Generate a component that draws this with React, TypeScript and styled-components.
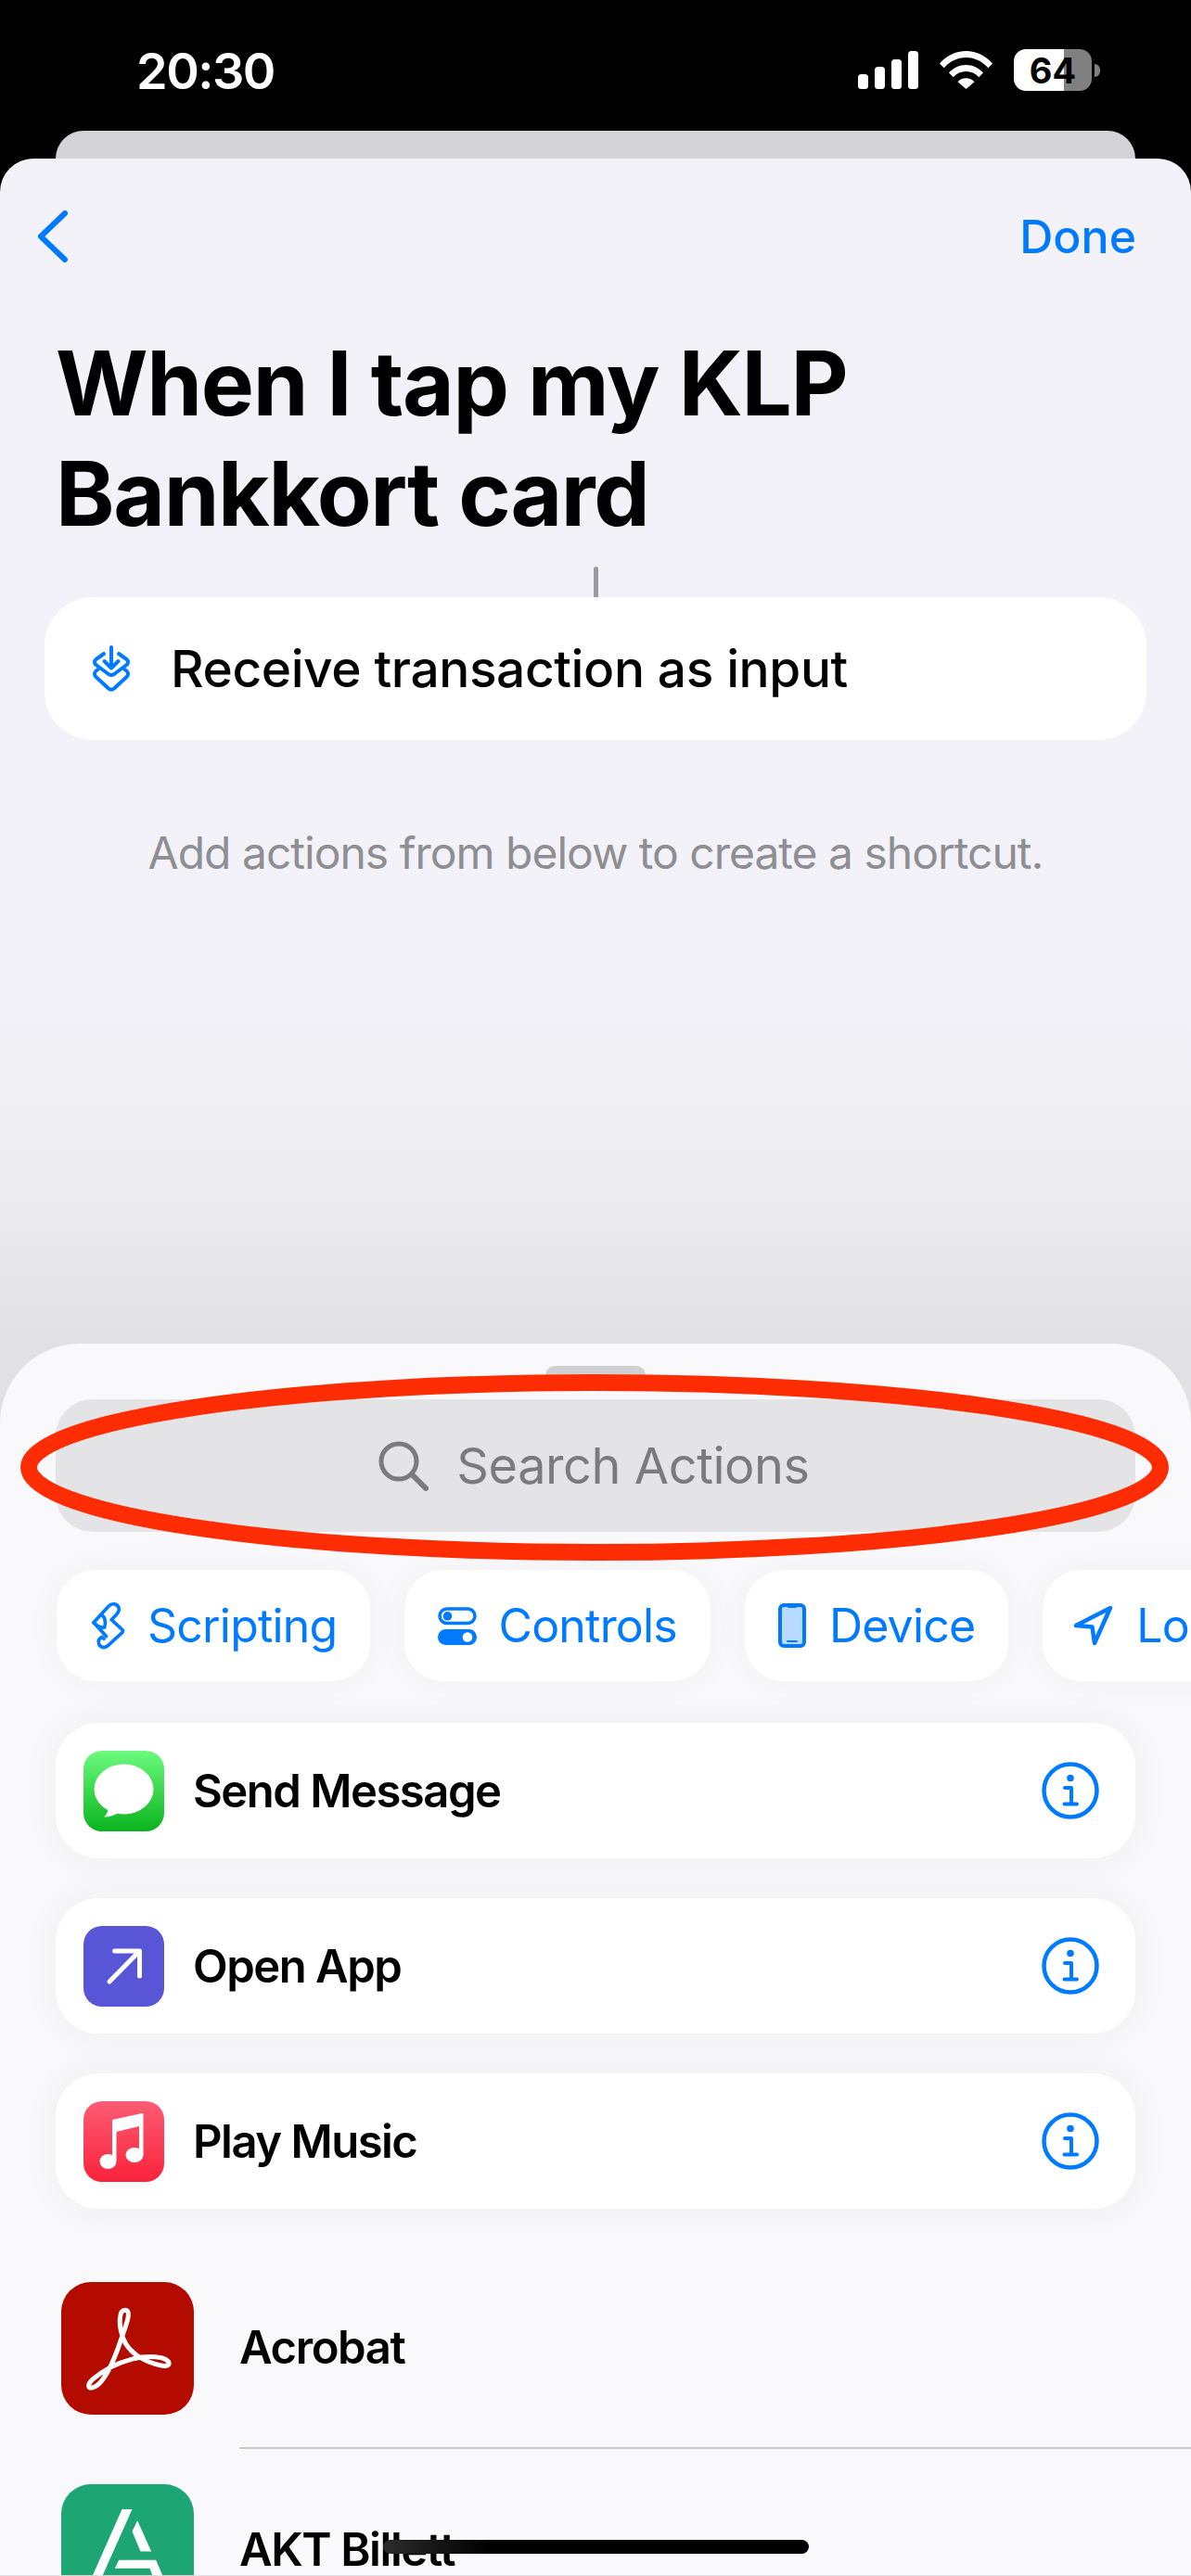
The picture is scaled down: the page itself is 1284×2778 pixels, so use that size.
import styled, { createGlobalStyle } from 'styled-components'

const blue = '#007aff'

const GlobalStyle = createGlobalStyle`
  html, body {
    margin: 0;
    padding: 0;
    background: #000;
  }
  * {
    box-sizing: border-box;
  }
`

const categories = [
  { id: 1, icon: <ScriptIcon />, text: 'Scripting', gap: 22 },
  { id: 2, icon: <ControlsIcon />, text: 'Controls', gap: 23 },
  { id: 3, icon: <DeviceIcon />, text: 'Device', gap: 25 },
  { id: 4, icon: <LocationIcon />, text: 'Location', gap: 25 },
]

const actions = [
  { id: 1, icon: <MessageIcon />, text: 'Send Message', tile: 'linear-gradient(180deg, #6cfb7e, #0ab31e)' },
  { id: 2, icon: <OpenAppIcon />, text: 'Open App', tile: '#5856d6' },
  { id: 3, icon: <MusicIcon />, text: 'Play Music', tile: 'linear-gradient(180deg, #fb5c74, #fa233b)' },
]

const apps = [
  { id: 1, icon: <AcrobatLogo />, text: 'Acrobat', tile: '#b30b00' },
  { id: 2, icon: <AktLogo />, text: 'AKT Billett', tile: '#1da574' },
]

const App: React.FC = () => {
  return (
    <Page>
      <GlobalStyle />
      <StatusBar>
        <Clock>20:30</Clock>
        <StatusIcons>
          <SignalIcon />
          <WifiIcon />
          <BatteryWrap>
            <Battery>64</Battery>
            <BatteryNub />
          </BatteryWrap>
        </StatusIcons>
      </StatusBar>
      <PeekCard />
      <Sheet>
        <Editor>
          <NavBar>
            <BackIcon />
            <DoneLabel>Done</DoneLabel>
          </NavBar>
          <Title>When I tap my KLP Bankkort card</Title>
          <Connector />
          <InputCard>
            <StackIcon />
            <InputLabel>Receive transaction as input</InputLabel>
          </InputCard>
          <Hint>Add actions from below to create a shortcut.</Hint>
        </Editor>
        <Panel>
          <Grabber />
          <SearchField>
            <SearchIcon />
            <SearchText>Search Actions</SearchText>
          </SearchField>
          <Chips>
            {categories.map((category) => (
              <Chip key={category.id} $gap={category.gap}>
                {category.icon}
                <span>{category.text}</span>
              </Chip>
            ))}
          </Chips>
          <ActionList>
            {actions.map((action) => (
              <ActionRow key={action.id}>
                <ActionTile $bg={action.tile}>{action.icon}</ActionTile>
                <ActionName>{action.text}</ActionName>
                <InfoIcon />
              </ActionRow>
            ))}
          </ActionList>
          <AppList>
            {apps.map((app) => (
              <AppRow key={app.id}>
                <AppTile $bg={app.tile}>{app.icon}</AppTile>
                <AppBody>{app.text}</AppBody>
              </AppRow>
            ))}
          </AppList>
          <Annotation viewBox="0 0 1238 201">
            <ellipse cx="619" cy="100.5" rx="610" ry="91.5" fill="none" stroke="#fe2c02" strokeWidth="18" />
          </Annotation>
        </Panel>
      </Sheet>
      <HomeIndicator />
    </Page>
  )
}

export default App

function SignalIcon() {
  return (
    <svg width="65" height="41" viewBox="0 0 65 41" fill="#fff">
      <rect x="0" y="25" width="11" height="16" rx="3.5" />
      <rect x="18" y="17" width="11" height="24" rx="3.5" />
      <rect x="36" y="9" width="11" height="32" rx="3.5" />
      <rect x="54" y="0" width="11" height="41" rx="3.5" />
    </svg>
  )
}

function WifiIcon() {
  return (
    <svg width="57" height="41" viewBox="0 0 57 41" fill="#fff">
      <path d="M0 13.5C7.5 4.8 17.5 0 28.5 0S49.5 4.8 57 13.5l-4.6 4.7C46 11 37.7 7 28.5 7S11 11 4.6 18.2z" />
      <path d="M10 23.6C14.8 18 21.3 15 28.5 15S42.2 18 47 23.6l-4.7 4.7C38.6 24.2 33.8 22 28.5 22S18.4 24.2 14.7 28.3z" />
      <path d="M19.5 33.2C21.8 30.6 25 29.3 28.5 29.3S35.2 30.6 37.5 33.2L28.5 41z" />
    </svg>
  )
}

function BackIcon() {
  return (
    <svg width="33" height="56" viewBox="0 0 33 56" fill="none" stroke={blue} strokeWidth="6" strokeLinecap="round" strokeLinejoin="round">
      <path d="M30 3L4 28L30 53" />
    </svg>
  )
}

function StackIcon() {
  return (
    <svg width="40" height="50" viewBox="0 0 40 50" fill="none" stroke={blue} strokeWidth="4" strokeLinecap="round" strokeLinejoin="round">
      <path d="M20 2V24M12.5 17L20 24.5L27.5 17" />
      <path d="M12 9L3.5 15C1.5 16.5 1.5 19.5 3.5 21L17 31C19 32.3 21 32.3 23 31L36.5 21C38.5 19.5 38.5 16.5 36.5 15L28 9" />
      <path d="M5.5 26L3.5 27.5C1.5 29 1.5 32.5 3.5 34L17 46.5C19 48 21 48 23 46.5L36.5 34C38.5 32.5 38.5 29 36.5 27.5L34.5 26" />
    </svg>
  )
}

function SearchIcon() {
  return (
    <svg width="54" height="54" viewBox="0 0 54 54" fill="none" stroke="#7a7a7f" strokeWidth="5" strokeLinecap="round">
      <circle cx="22" cy="22" r="19" />
      <path d="M36 36L51 51" strokeWidth="6" />
    </svg>
  )
}

function ScriptIcon() {
  return (
    <svg width="40" height="54" viewBox="165 130 130 175" fill="none" stroke={blue} strokeWidth="12" strokeLinejoin="round" strokeLinecap="round">
      <path d="M178 207L230 150C243 136 262 142 266 156C269 167 262 174 256 181L240 197L277 231C281 235 281 239 277 243L228 288C217 298 200 295 196 281C193 270 199 262 207 258L214 264" />
      <path d="M178 207L222 255" />
      <path d="M204 180C217 186 222 200 216 224C200 226 188 218 178 207" />
    </svg>
  )
}

function ControlsIcon() {
  return (
    <svg width="42" height="41" viewBox="0 0 42 41">
      <rect x="2" y="2" width="38" height="15.5" rx="7.75" fill="none" stroke={blue} strokeWidth="3.5" />
      <circle cx="10.5" cy="9.8" r="4.8" fill={blue} />
      <rect x="0" y="24" width="42" height="17" rx="8.5" fill={blue} />
      <circle cx="32" cy="32.5" r="5.3" fill="#fff" />
    </svg>
  )
}

function DeviceIcon() {
  return (
    <svg width="30" height="48" viewBox="0 0 30 48">
      <rect x="2" y="2" width="26" height="44" rx="4" fill="#b9dbff" stroke={blue} strokeWidth="4" />
      <rect x="10" y="2" width="10" height="3" rx="1.5" fill={blue} />
      <rect x="9" y="40" width="12" height="2" rx="1" fill={blue} />
    </svg>
  )
}

function LocationIcon() {
  return (
    <LocationSvg width="43" height="44" viewBox="0 0 43 44" fill="none" stroke={blue} strokeWidth="4.5" strokeLinejoin="round" strokeLinecap="round">
      <path d="M3 22L40 3L23 41L20.5 23.5Z" />
    </LocationSvg>
  )
}

function InfoIcon() {
  return (
    <InfoSvg width="62" height="62" viewBox="0 0 62 62" fill="none" stroke={blue} strokeWidth="4.5" strokeLinecap="round">
      <circle cx="31" cy="31" r="28.5" />
      <circle cx="31" cy="17.5" r="3.8" fill={blue} stroke="none" />
      <path d="M25 28H32V45M24.5 45.5H38" strokeWidth="4" strokeLinejoin="round" />
    </InfoSvg>
  )
}

function MessageIcon() {
  return (
    <svg width="87" height="87" viewBox="0 0 87 87" fill="#fff">
      <ellipse cx="43.5" cy="41.5" rx="32" ry="27" />
      <path d="M26 60C27 64 26 68 22 71.5C28 71.5 33 69.5 38 67Z" />
    </svg>
  )
}

function OpenAppIcon() {
  return (
    <svg width="87" height="87" viewBox="0 0 87 87" fill="none" stroke="#fff" strokeWidth="5" strokeLinecap="round" strokeLinejoin="round">
      <path d="M28 60L60 27.5M33.5 27H60.5V54" />
    </svg>
  )
}

function MusicIcon() {
  return (
    <svg width="87" height="87" viewBox="0 0 87 87" fill="#fff">
      <path d="M31 20L63 13C64 13 64.5 13.5 64.5 14.5V58H60V27L35.5 33V64H31Z" />
      <ellipse cx="26.5" cy="65" rx="9" ry="8" />
      <ellipse cx="55" cy="58" rx="9.5" ry="8" />
    </svg>
  )
}

function AcrobatLogo() {
  return (
    <svg width="143" height="143" viewBox="48 33 430 430" fill="none" stroke="#fff" strokeWidth="15" strokeLinejoin="round">
      <path d="M255 124C235 124 233 170 248 214C262 252 300 282 350 298C385 310 402 305 396 292C385 274 330 270 280 282C230 295 180 322 148 350C133 365 133 380 150 375C182 368 215 300 240 225C255 180 280 124 255 124Z" />
    </svg>
  )
}

function AktLogo() {
  return (
    <svg width="143" height="143" viewBox="48 682 430 430" fill="#fff">
      <path d="M245 763H278L150 1050H118Z" />
      <path d="M295 800L340 900H305L278 835Z" />
      <path d="M235 928H355L395 1020H360L335 955H222Z" />
    </svg>
  )
}

const Page = styled.div`
  position: relative;
  display: flex;
  flex-direction: column;
  width: 1284px;
  height: 2778px;
  overflow: hidden;
  background: #000;
  border-bottom: 1px solid #dcdce0;
  font-family: Inter, 'Liberation Sans', sans-serif;
`

const StatusBar = styled.div`
  display: flex;
  flex: none;
  align-items: flex-start;
  justify-content: space-between;
  height: 141px;
  padding: 53px 98px 0 147px;
`

const Clock = styled.div`
  color: #fff;
  font-size: 54px;
  font-weight: 600;
  line-height: 48px;
  letter-spacing: -1.5px;
`

const StatusIcons = styled.div`
  display: flex;
  align-items: flex-start;
  gap: 23px;
  padding-top: 2px;
`

const BatteryWrap = styled.div`
  display: flex;
  align-items: center;
  gap: 3px;
  margin-top: -2px;
`

const Battery = styled.div`
  display: flex;
  align-items: center;
  justify-content: center;
  width: 84px;
  height: 45px;
  border-radius: 13px;
  background: linear-gradient(90deg, #fff 64%, #808080 64%);
  color: #000;
  font-size: 38px;
  font-weight: 700;
`

const BatteryNub = styled.div`
  width: 6px;
  height: 14px;
  border-radius: 0 7px 7px 0;
  background: #808080;
`

const PeekCard = styled.div`
  flex: none;
  height: 30px;
  margin: 0 60px;
  border-radius: 30px 30px 0 0;
  background: #d3d3d8;
`

const Sheet = styled.div`
  display: flex;
  flex: 1;
  flex-direction: column;
  min-height: 0;
  border-radius: 36px 36px 0 0;
  overflow: hidden;
  background: linear-gradient(
    180deg,
    #f2f2f8 0,
    #f2f2f8 850px,
    #eeeef3 1050px,
    #e6e6eb 1200px,
    #e0e0e5 1278px
  );
`

const Editor = styled.div`
  flex: none;
  height: 1278px;
  padding-top: 56px;
`

const NavBar = styled.div`
  display: flex;
  align-items: center;
  justify-content: space-between;
  height: 56px;
  padding: 0 59px 0 40px;
`

const DoneLabel = styled.div`
  color: ${blue};
  font-size: 50px;
  font-weight: 500;
`

const Title = styled.h1`
  width: 1000px;
  margin: 71px 0 0 60px;
  color: #000;
  font-size: 96px;
  font-weight: 700;
  line-height: 119px;
  letter-spacing: -1.3px;
`

const Connector = styled.div`
  width: 5px;
  height: 33px;
  margin: 19px auto 0;
  border-radius: 3px 3px 0 0;
  background: #9a9a9f;
`

const InputCard = styled.div`
  display: flex;
  align-items: center;
  gap: 44px;
  height: 154px;
  margin: 0 48px;
  padding-left: 52px;
  border-radius: 52px;
  background: #fff;
`

const InputLabel = styled.div`
  color: #000;
  font-size: 55px;
  font-weight: 500;
  letter-spacing: -0.4px;
`

const Hint = styled.div`
  margin-top: 92px;
  color: #8e8e93;
  font-size: 48px;
  letter-spacing: -1px;
  text-align: center;
`

const Panel = styled.div`
  position: relative;
  flex: 1;
  min-height: 0;
  padding-top: 24px;
  border-radius: 86px 86px 0 0;
  overflow: hidden;
  background: #f9f9fc;
`

const Grabber = styled.div`
  width: 108px;
  height: 18px;
  margin: 0 auto 18px;
  border-radius: 10px 10px 0 0;
  background: #d0d0d4;
`

const SearchField = styled.div`
  display: flex;
  align-items: center;
  justify-content: center;
  gap: 30px;
  height: 143px;
  margin: 0 60px;
  padding-right: 3px;
  border-radius: 40px;
  background: #e4e4e7;
`

const SearchText = styled.div`
  color: #7a7a7f;
  font-size: 54px;
  letter-spacing: -0.4px;
`

const Chips = styled.div`
  display: flex;
  gap: 37px;
  margin-top: 41px;
  padding-left: 61px;
`

const Chip = styled.div<{ $gap: number }>`
  display: flex;
  flex: none;
  align-items: center;
  gap: ${(props) => props.$gap}px;
  height: 120px;
  padding: 0 36px;
  border-radius: 42px;
  background: #fff;
  box-shadow: 0 0 40px rgba(0, 0, 0, 0.035);
  color: ${blue};
  font-size: 50px;
  letter-spacing: -0.8px;
`

const LocationSvg = styled.svg`
  margin-left: -3px;
`

const ActionList = styled.div`
  display: flex;
  flex-direction: column;
  gap: 43px;
  margin: 45px 60px 0;
`

const ActionRow = styled.div`
  display: flex;
  align-items: center;
  gap: 31px;
  height: 146px;
  padding: 0 39px 0 30px;
  border-radius: 46px;
  background: #fff;
  box-shadow: 0 0 40px rgba(0, 0, 0, 0.05);
`

const ActionTile = styled.div<{ $bg: string }>`
  display: flex;
  flex: none;
  width: 87px;
  height: 87px;
  border-radius: 20px;
  background: ${(props) => props.$bg};
`

const ActionName = styled.div`
  flex: 1;
  color: #000;
  font-size: 49px;
  font-weight: 600;
  letter-spacing: -1.5px;
`

const InfoSvg = styled.svg`
  flex: none;
`

const AppList = styled.div`
  display: flex;
  flex-direction: column;
  margin-top: 41px;
  padding-left: 66px;
`

const AppRow = styled.div`
  display: flex;
  flex: none;
  align-items: center;
  gap: 49px;
  height: 218px;
`

const AppTile = styled.div<{ $bg: string }>`
  display: flex;
  flex: none;
  width: 143px;
  height: 143px;
  border-radius: 32px;
  overflow: hidden;
  background: ${(props) => props.$bg};
`

const AppBody = styled.div`
  display: flex;
  flex: 1;
  align-items: center;
  height: 100%;
  border-bottom: 2px solid #c9c9cd;
  color: #000;
  font-size: 49px;
  font-weight: 600;
  letter-spacing: -1.4px;
`

const Annotation = styled.svg`
  position: absolute;
  top: 33px;
  left: 22px;
  width: 1238px;
  height: 201px;
`

const HomeIndicator = styled.div`
  position: absolute;
  bottom: 23px;
  left: 413px;
  width: 459px;
  height: 15px;
  border-radius: 8px;
  background: linear-gradient(90deg, #2c2c2c 0, #000 25%);
`
